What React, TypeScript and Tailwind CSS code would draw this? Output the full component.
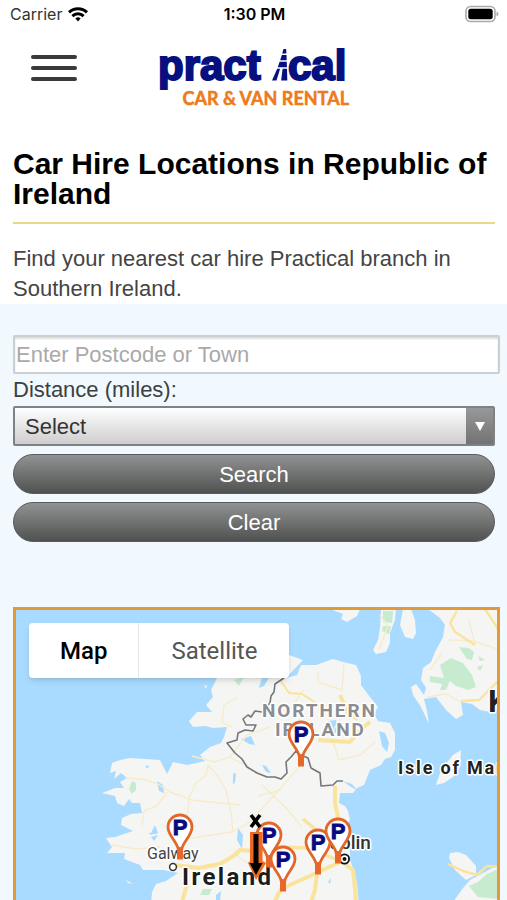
import { useState } from "react";

const sans = "font-['Liberation_Sans',Arial,sans-serif]";
const roboto = "font-['Roboto',sans-serif]";

function StatusBar() {
  return (
    <div className="grid h-7 grid-cols-3 items-center pl-2.5 pr-2 font-['Inter',sans-serif] text-black">
      <div className="flex items-center gap-1.5 text-base text-[#333]">
        <span>Carrier</span>
        <svg width="20" height="15" viewBox="0 0 20 15" fill="none" stroke="#000" strokeWidth="3" aria-label="Wi-Fi">
          <path d="M1 5.4a13 13 0 0 1 18 0" />
          <path d="M4.4 9.1a8 8 0 0 1 11.2 0" />
          <path d="M7.4 11.4a3.8 3.8 0 0 1 5.2 0L10 14.4z" fill="#000" stroke="none" />
        </svg>
      </div>
      <div className="text-center text-base font-semibold">1:30 PM</div>
      <svg className="justify-self-end" width="34" height="18" viewBox="0 0 34 18" aria-label="Battery full">
        <rect x="1" y="1.5" width="29" height="15" rx="4.5" fill="#fff" stroke="#aaa" strokeWidth="1.6" />
        <rect x="3.3" y="3.8" width="24.4" height="10.4" rx="2.5" fill="#000" />
        <path d="M31.5 6.5q2 .8 2 2.5t-2 2.5z" fill="#aaa" />
      </svg>
    </div>
  );
}

function Logo() {
  return (
    <svg
      className="overflow-visible"
      width="194"
      height="64"
      viewBox="155 45 194 64"
      role="img"
      aria-label="Practical Car and Van Rental"
    >
      <g
        className="fill-[#06117f] font-['Liberation_Sans',Arial,sans-serif] text-[42px] font-bold"
        stroke="#06117f"
        strokeWidth="2"
      >
        <text x="156" y="80">pract</text>
        <text x="286" y="80">cal</text>
      </g>
      <g fill="#06117f">
        <path d="M281.5 49h2.6l.3 4.5h-4.2z" />
        <path d="M279.8 55h4.7l.2 5.2h-6.5z" />
        <path d="M277.6 61.8h7.2l.1 5.4h-9.1z" />
        <path d="M275.2 68.8h2.9l-3.6 11.7H270z" />
        <path d="M280.6 68.8h4.4l.3 11.7h-6.2z" />
      </g>
      <text x="347" y="105" textAnchor="end" className="fill-[#ee7a1a] font-['Lato',sans-serif] text-lg font-bold" stroke="#ee7a1a" strokeWidth="0.5">
        CAR &amp; VAN RENTAL
      </text>
    </svg>
  );
}

function Pin({ x, y }: { x: number; y: number }) {
  return (
    <g transform={`translate(${x} ${y})`}>
      <path
        d="M-1.5 31V23C-3 14-12 9-12 0a12 12 0 0 1 24 0C12 9 3 14 1.5 23V31z"
        fill="#fff"
        stroke="#e0682a"
        strokeWidth="2.8"
      />
      <path d="M-2.8 20h5.6v12h-5.6z" fill="#e8662a" />
      <text
        y="8"
        textAnchor="middle"
        className="fill-[#0a0a80] font-['Liberation_Sans',Arial,sans-serif] text-[22px] font-bold"
        stroke="#0a0a80"
        strokeWidth="0.9"
      >
        P
      </text>
    </g>
  );
}

function MapDrawing() {
  return (
    <svg
      className="block h-full w-full"
      viewBox="16 610 481 290"
      preserveAspectRatio="xMinYMin slice"
      role="img"
      aria-label="Map of Ireland with branch locations"
    >
      <rect x="0" y="600" width="520" height="320" fill="#a9daff" />
      <g fill="#f5f5f3">
        <path d="M217 655L217 678 211 690 213 697 206 705 212 712 197 712 189 721 193 727 205 726 213 728 227 727 224 737 221 743 210 747 200 755 205 761 196 763 187 765 173 762 167 774 160 760 145 759 130 758 120 760 112 763 110 773 116 771 114 779 121 773 127 778 120 782 124 788 115 788 102 793 115 796 117 803 124 806 129 799 132 803 140 803 142 813 131 814 122 818 121 825 133 831 115 837 106 838 112 847 107 853 125 853 124 859 140 865 143 870 163 870 178 873 166 881 156 884 152 892 151 905H359L357 883 353 868 350 860V848L354 837 345 827 350 820 348 811 345 806 339 803 340 793 353 793 357 788 364 785 370 770 381 765 385 759 391 757 395 750V733L390 723 378 721 374 714 378 707 370 697 361 685V676L356 665 343 662 333 659 316 665 301 665 297 675 286 678 303 660 289 655z" />
        <path d="M330 609L343 614 341 619 347 622 357 616 360 609z" />
        <path d="M381 609L380 628 378 640 373 650 376 654 386 652 390 643V633L395 620 396 609z" />
        <path d="M403 609L400 625 405 637 413 639 416 633 415 620 411 609z" />
        <path d="M428 609L440 618 445 625 443 637 435 652 431 662 423 668 421 680 426 688 424 695 416 684 411 687 413 695 421 707 429 724 427 711 424 699 436 697 446 710 456 719 463 715 461 702 472 704 480 710 490 712 500 708V609z" />
        <path d="M461 750L453 755 441 770 436 785 444 783 453 777 460 767z" />
        <path d="M450 853L458 852 466 855 476 866 476 875 466 880 455 870 449 858z" />
        <path d="M500 864L483 873 470 880 463 888 451 905H500z" />
        <path d="M126 880l7 4-5-1zM204 685l3 1-1 3z" />
      </g>

      <g fill="#a9daff">
        <path d="M379 731L385 733 389 743 387 752 382 746zM328 721l8-1 3 9-7 8-5-7zM241 739l10-3 4 9-6-1zM262 765l4 1 5 7-5-1zM262 677l11-6-9 15-5 2zM157 781l6 4 1 8-5-2zM233 774l3-1-1 9-2 3zM155 825l3 8-8 2zM238 828l5 7-1 14-5-9zM148 834l9-4v4zM216 895l5-4-1 12-4 2zM328 882l3-4-1 6z" />
        <path d="M146 765l4 2-4 1zM151 837l7-2-4 6zM343 781l9 3 5 6-6-3z" />
      </g>

      <g fill="#c6ebcf">
        <path d="M440 665L451 658 463 663 472 675 476 687 468 690 456 686 450 681 446 690 440 690 442 684 430 682 430 676 444 678z" />
        <path d="M459 647l10 1 5 4-2 8-5-1zM478 656l7 4-5 1zM477 667l6-2-3 6zM383 611h10l-1 12-9-1zM383 626h8l-2 8-7-3zM132 781l4 2v7l-4 4-3-5zM234 680l10-3-5 9z" />
        <path d="M500 868L487 874 478 882 469 886 478 897 500 899zM203 889h9l-3 6h-9z" />
      </g>

      <g fill="none" stroke="#f6eccb" strokeWidth="1.4">
        <path d="M125 778L142 779 158 784 170 792 192 800 240 805M167 792L157 806 144 811M208 765L206 775 196 783 189 798 187 818M208 765L218 776 226 790 231 812 233 832M144 811L142 826M112 845L136 849 160 847M192 756L215 762 230 757 247 735 270 727M180 840L205 836 232 832 250 822 277 792 301 765M233 728L222 722 224 705 238 697M262 785L288 810 302 827M258 796L281 790M318 672V682L342 690 344 664M339 760L331 735 341 717M339 760L360 755 375 742M230 757L245 765M449 640L474 641 500 650M427 697L446 694 461 702M442 653L430 670M475 645L469 620M380 615L388 626 379 650M303 690L290 710M272 861L264 878M233 852L250 865" />
      </g>
      <g fill="none" stroke="#fae39b" strokeLinejoin="round">
        <path d="M280 680L289 693 302 694 313 701 319 706" strokeWidth="2" />
        <path d="M318 740L350 742 362 728 370 722" strokeWidth="4" />
        <path d="M340 695l8 18 10 6" strokeWidth="4" />
        <path d="M335 786L335 803 338 817 340 850" strokeWidth="4" />
        <path d="M303 819L320 833M340 861L309 848 280 847 250 848" strokeWidth="3.5" />
        <path d="M175 865L198 868 220 864 235 855 240 850 253 851" strokeWidth="4" />
        <path d="M187 885L181 905M340 862L312 875 281 889 273 905M317 873L315 890 310 905M345 864L353 870 355 888 356 905" strokeWidth="4" />
        <path d="M450 623L457 611M485 609L500 632M450 623L455 632 475 645M461 701L479 700 497 682M448 864L463 871 477 875 487 866 500 867" strokeWidth="2.4" />
      </g>

      <path
        d="M284 678L275 684 274 692 271 696 270 703 262 712 255 711 251 717 248 715 243 719 246 725 256 725 253 731 245 730 238 733 237 740 227 743 235 753 242 759 247 767 257 773 267 777 275 777 281 779 287 773 286 762 291 757 296 751 303 756 308 758 311 768 320 773 321 786 333 785 337 781 343 781"
        fill="none"
        stroke="#73767a"
        strokeWidth="1.6"
        strokeLinejoin="round"
      />

      <g className="font-['Roboto',sans-serif]" stroke="#fff" strokeWidth="3" strokeLinejoin="round" paintOrder="stroke">
        <text x="262" y="717" className="fill-[#8b8d90] text-[19px] font-bold tracking-widest">NORTHERN</text>
        <text x="275" y="736" className="fill-[#8b8d90] text-[19px] font-bold tracking-widest">IRELAND</text>
        <text x="398" y="774" className="fill-[#222] text-lg font-bold tracking-widest">Isle of Man</text>
        <text x="488" y="712" className="fill-[#222] text-[32px] font-bold">Kingdom</text>
        <text x="147" y="859" className="fill-[#444] text-base">Galway</text>
        <text x="182" y="885" className="fill-[#1c1c1c] text-2xl font-bold tracking-widest">Ireland</text>
        <text x="317" y="849" className="fill-[#333] text-[19px] font-medium">Dublin</text>
      </g>

      <circle cx="173" cy="867" r="3.4" fill="#fff" stroke="#333" strokeWidth="1.5" />
      <circle cx="344.5" cy="859" r="4.6" fill="#fff" stroke="#111" strokeWidth="1.8" />
      <circle cx="344.5" cy="859" r="2" fill="#111" />

      <Pin x={301} y={734} />
      <Pin x={180} y={827} />
      <Pin x={269} y={835} />
      <Pin x={283} y={859} />
      <Pin x={318} y={842} />
      <Pin x={338} y={831} />

      <path d="M251 815l9 12M260 815l-9 12" stroke="#000" strokeWidth="3.6" />
      <path d="M250 832h12.500v29l3.500 2-10 17-8-17 2-2z" fill="#ee6a24" />
      <path d="M253.500 834h5v29h4l-6.500 12-6.500-12h4z" fill="#000" />
    </svg>
  );
}

export default function App() {
  const [view, setView] = useState("map");
  const tab = "h-full cursor-pointer text-2xl";
  const pill =
    "h-10 w-full rounded-full border border-[#555b5e] bg-linear-to-b from-[#929292] to-[#505252] text-[22px] text-white";

  return (
    <div className={`flex h-screen min-h-[700px] flex-col overflow-hidden bg-white ${sans}`}>
      <StatusBar />
      <header className="grid grid-cols-[1fr_auto_1fr] items-start px-[31px] pt-[17px]">
        <button aria-label="Menu" className="mt-2.5 flex w-[46px] flex-col gap-[7px]">
          <span className="h-1 rounded-sm bg-[#3a3a3a]" />
          <span className="h-1 rounded-sm bg-[#3a3a3a]" />
          <span className="h-1 rounded-sm bg-[#3a3a3a]" />
        </button>
        <Logo />
      </header>

      <section className="px-3 pl-[13px] pt-10">
        <h1 className="border-b-2 border-[#e8d98a] pb-[13px] text-[30px] font-bold leading-[30px] text-black">
          Car Hire Locations in Republic of Ireland
        </h1>
        <p className="pt-5 text-[22px] leading-[30px] text-[#444]">
          Find your nearest car hire Practical branch in Southern Ireland.
        </p>
      </section>

      <main className="flex min-h-0 flex-1 flex-col bg-[#f1f9fe]">
        <form className="pl-[13px] pr-3 pt-[31px]" onSubmit={(e) => e.preventDefault()}>
          <input
            type="text"
            aria-label="Postcode or town"
            placeholder="Enter Postcode or Town"
            className="-mr-[5px] block h-[39px] w-[calc(100%+5px)] rounded-xs border-2 border-[#c9d0d4] bg-white px-px text-[22px] text-[#333] shadow-[inset_0_2px_2px_#ddd] placeholder:text-[#a9a9a9]"
          />
          <label htmlFor="distance" className="block text-[22px] leading-8 text-[#3c3f42]">
            Distance (miles):
          </label>
          <div className="relative">
            <select
              id="distance"
              className="block h-10 w-full appearance-none rounded-xs border-2 border-[#7d8285] bg-linear-to-b from-white to-[#cfcdcd] pl-2.5 pr-9 text-[22px] text-[#333]"
            >
              <option>Select</option>
              <option>10</option>
              <option>25</option>
              <option>50</option>
            </select>
            <div className="pointer-events-none absolute inset-y-0.5 right-0.5 flex w-[27px] items-center justify-center bg-linear-to-b from-[#989898] to-[#737373]">
              <svg width="10" height="9" viewBox="0 0 10 9" aria-hidden="true">
                <path d="M0 0h10L5 9z" fill="#fff" />
              </svg>
            </div>
          </div>
          <div className="flex flex-col gap-2 pt-2">
            <button type="submit" className={pill}>Search</button>
            <button type="reset" className={pill}>Clear</button>
          </div>
        </form>

        <div className="relative ml-[13px] mr-[7px] mt-[65px] min-h-0 flex-1 overflow-hidden border-[3px] border-b-0 border-[#e09b38]">
          <MapDrawing />
          <div className={`absolute left-[13px] top-[13px] flex h-[55px] rounded-sm bg-white shadow-md ${roboto}`}>
            <button
              onClick={() => setView("map")}
              className={`${tab} border-r border-[#e8e8e8] px-[31px] ${view === "map" ? "font-medium text-black" : "text-[#565656]"}`}
            >
              Map
            </button>
            <button
              onClick={() => setView("satellite")}
              className={`${tab} px-8 ${view === "satellite" ? "font-medium text-black" : "text-[#565656]"}`}
            >
              Satellite
            </button>
          </div>
        </div>
      </main>
    </div>
  );
}
